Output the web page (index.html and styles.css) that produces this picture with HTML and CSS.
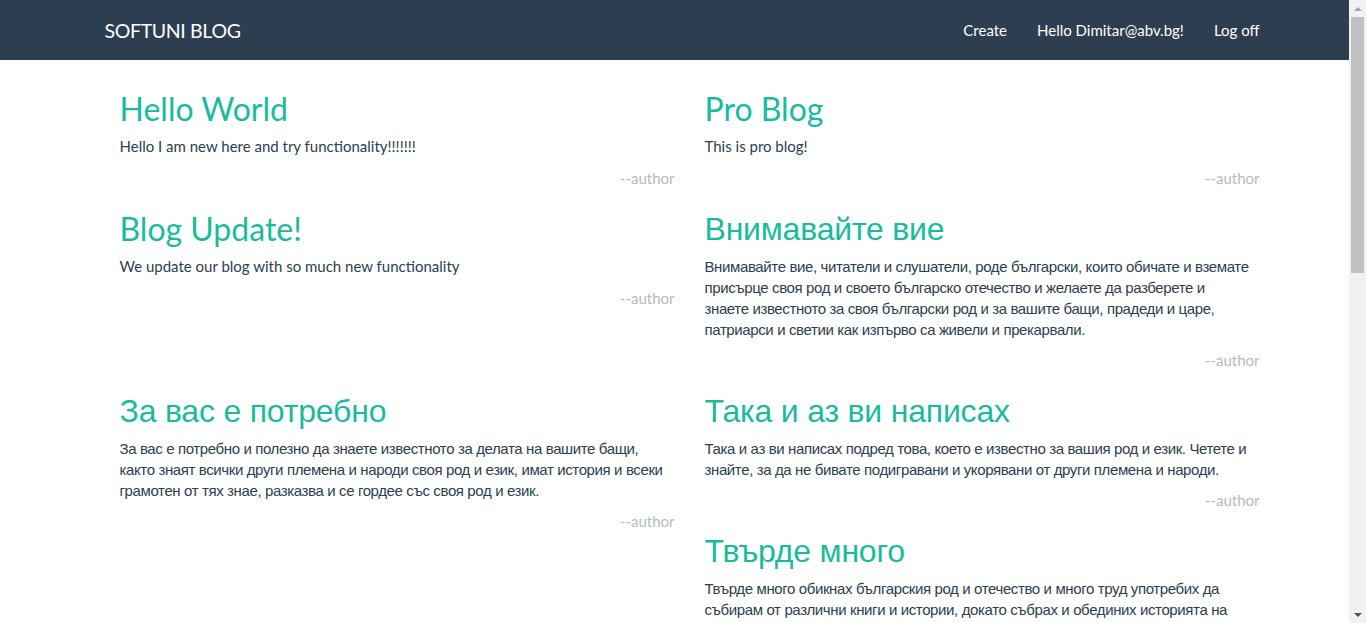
FILE: index.html
```html
<!DOCTYPE html>
<html lang="bg">
<head>
<meta charset="utf-8">
<title>SoftUni Blog</title>
<link rel="stylesheet" href="styles.css">
</head>
<body>
<nav class="navbar">
  <div class="container nav-inner">
    <a class="brand" href="#">SOFTUNI BLOG</a>
    <ul class="nav-links">
      <li><a href="#">Create</a></li>
      <li><a href="#">Hello Dimitar@abv.bg!</a></li>
      <li><a href="#">Log off</a></li>
    </ul>
  </div>
</nav>
<main class="container posts">
  <div class="row">
    <div class="col">
      <article class="post">
        <h2>Hello World</h2>
        <p>Hello I am new here and try functionality!!!!!!!</p>
        <p class="author">--author</p>
      </article>
    </div>
    <div class="col">
      <article class="post">
        <h2>Pro Blog</h2>
        <p>This is pro blog!</p>
        <p class="author">--author</p>
      </article>
    </div>
  </div>
  <div class="row">
    <div class="col">
      <article class="post">
        <h2>Blog Update!</h2>
        <p>We update our blog with so much new functionality</p>
        <p class="author">--author</p>
      </article>
    </div>
    <div class="col">
      <article class="post">
        <h2 class="cy-title">Внимавайте вие</h2>
        <p class="cy">Внимавайте вие, читатели и слушатели, роде български, които обичате и вземате присърце своя род и своето българско отечество и желаете да разберете и<br>знаете известното за своя български род и за вашите бащи, прадеди и царе, патриарси и светии как изпърво са живели и прекарвали.</p>
        <p class="author">--author</p>
      </article>
    </div>
  </div>
  <div class="row">
    <div class="col">
      <article class="post">
        <h2 class="cy-title">За вас е потребно</h2>
        <p class="cy">За вас е потребно и полезно да знаете известното за делата на вашите бащи, както знаят всички други племена и народи своя род и език, имат история и всеки грамотен от тях знае, разказва и се гордее със своя род и език.</p>
        <p class="author">--author</p>
      </article>
    </div>
    <div class="col">
      <article class="post">
        <h2 class="cy-title">Така и аз ви написах</h2>
        <p class="cy">Така и аз ви написах подред това, което е известно за вашия род и език. Четете и знайте, за да не бивате подигравани и укорявани от други племена и народи.</p>
        <p class="author">--author</p>
      </article>
      <article class="post">
        <h2 class="cy-title">Твърде много</h2>
        <p class="cy">Твърде много обикнах българския род и отечество и много труд употребих да събирам от различни книги и истории, докато събрах и обединих историята на българския род от нашите бащи и прадеди, и написах всичко подред, за да знаете и вие.</p>
        <p class="author">--author</p>
      </article>
    </div>
  </div>
</main>
<div class="scrollbar" aria-hidden="true">
  <div class="sb-btn"><span class="sb-arrow-up"></span></div>
  <div class="sb-track"><div class="sb-thumb"></div></div>
  <div class="sb-btn"><span class="sb-arrow-down"></span></div>
</div>
</body>
</html>
```

FILE: styles.css
```css
* {
  box-sizing: border-box;
}

html, body {
  margin: 0;
  padding: 0;
}

body {
  margin-right: 17px;
  font-family: Lato, "Helvetica Neue", Helvetica, Arial, sans-serif;
  font-size: 15px;
  line-height: 1.42857143;
  color: #2c3e50;
  background: #ffffff;
}

.container {
  width: 1170px;
  margin: 0 auto;
  padding: 0 15px;
}

.navbar {
  background: #2c3e50;
  height: 60px;
}

.nav-inner {
  display: flex;
  justify-content: space-between;
  align-items: stretch;
  height: 60px;
}

.brand {
  display: block;
  font-size: 19.5px;
  line-height: 21px;
  padding: 19.5px 0;
  letter-spacing: -0.35px;
  color: #ffffff;
  text-decoration: none;
}

.nav-links {
  display: flex;
  list-style: none;
  margin: 0 -30px 0 0;
  padding: 0;
}

.nav-links a {
  display: block;
  padding: 19.5px 15px;
  line-height: 21px;
  color: #ffffff;
  text-decoration: none;
}

.posts {
  padding-top: 10px;
  padding-bottom: 40px;
}

.row {
  display: grid;
  grid-template-columns: 1fr 1fr;
  margin: 0 -30px 0 0;
}

.col {
  padding: 0 15px;
}

.post {
  padding-top: 21px;
}

.post h2 {
  margin: 0 0 10px;
  font-size: 32px;
  font-weight: 400;
  line-height: 1.1;
  color: #18bc9c;
}

.post p {
  margin: 0 0 10.5px;
}

.post .author {
  margin: 0;
  text-align: right;
  color: #b4bcc2;
}

.post h2.cy-title {
  padding-top: 1px;
  margin-bottom: 9px;
  font-family: "Liberation Sans", Arial, sans-serif;
  letter-spacing: -0.2px;
}

.post p.cy {
  font-family: "Liberation Sans", Arial, sans-serif;
  line-height: 21px;
  letter-spacing: -0.38px;
}

/* imitation of the classic window scrollbar seen in the screenshot */
.scrollbar {
  position: fixed;
  top: 0;
  right: 0;
  width: 17px;
  height: 100vh;
  display: flex;
  flex-direction: column;
  background: #f1f1f1;
}

.sb-btn {
  height: 17px;
  display: flex;
  align-items: center;
  justify-content: center;
  flex: none;
}

.sb-track {
  flex: 1;
  padding: 0 2px;
}

.sb-thumb {
  height: 256px;
  background: #c1c1c1;
}

.sb-arrow-up {
  width: 0;
  height: 0;
  border-left: 4px solid transparent;
  border-right: 4px solid transparent;
  border-bottom: 4px solid #a3a3a3;
}

.sb-arrow-down {
  width: 0;
  height: 0;
  border-left: 4px solid transparent;
  border-right: 4px solid transparent;
  border-top: 4px solid #505050;
}
```
